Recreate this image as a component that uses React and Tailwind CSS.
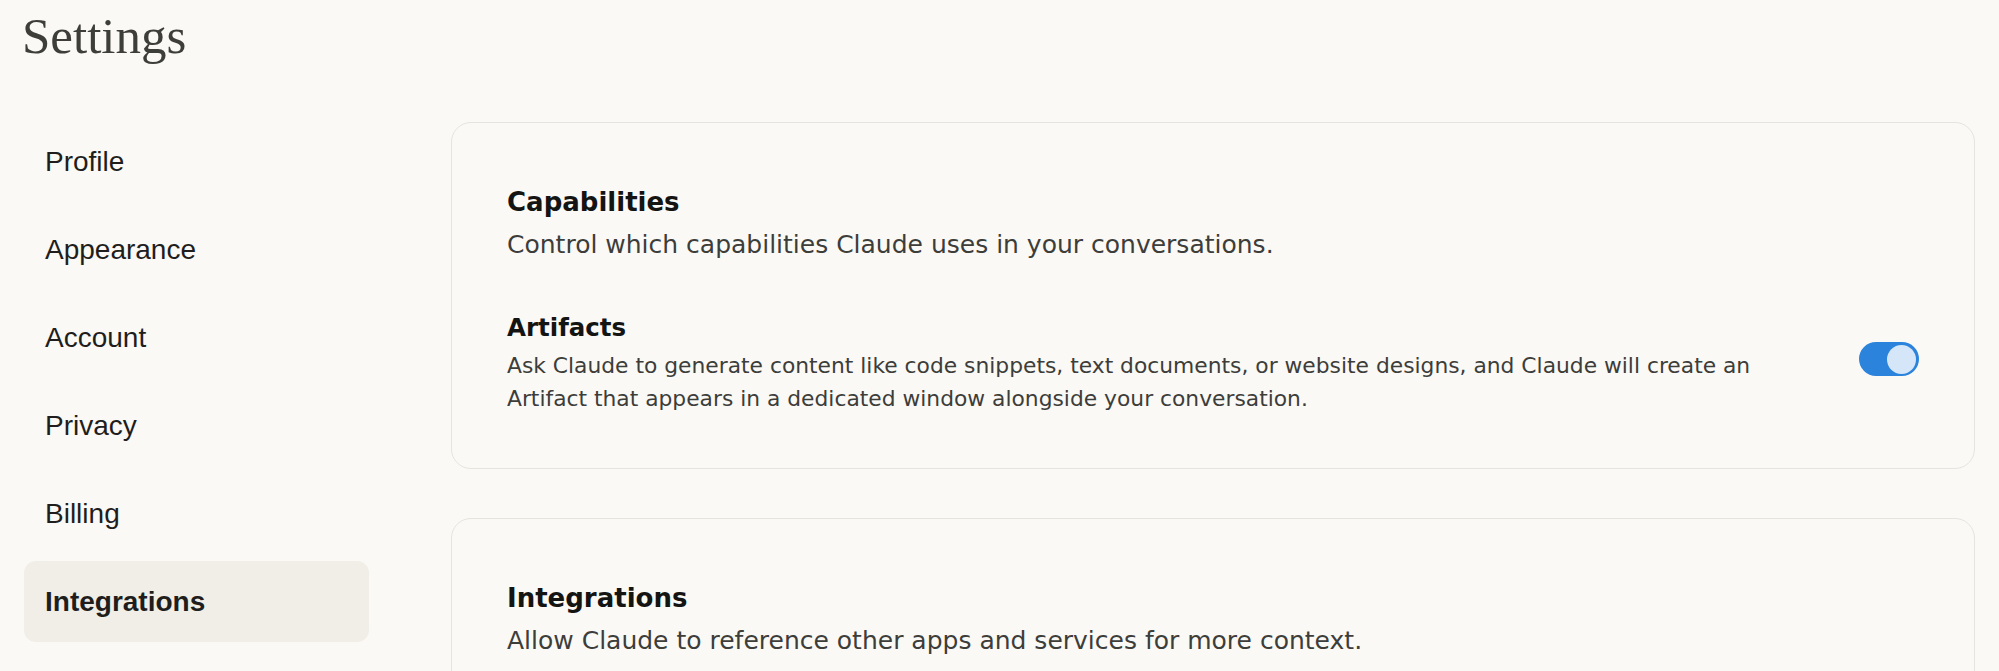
import React from "react";

const navItems = ["Profile", "Appearance", "Account", "Privacy", "Billing", "Integrations"];

function Toggle() {
  return (
    <div className="relative mt-[29px] h-[34px] w-[60px] shrink-0 rounded-full bg-[#2b83db]">
      <div className="absolute right-[3px] top-[2.5px] h-[29px] w-[29px] rounded-full bg-[#d6e6f9]" />
    </div>
  );
}

export default function App() {
  return (
    <div className="h-[671px] overflow-hidden bg-[#faf9f5] px-[24px]">
      <h1 className="-ml-[2px] pt-[11px] text-[51px] leading-[51px] text-[#3d3d3a] font-['Liberation_Serif',serif]">
        Settings
      </h1>
      <div className="mt-[59px] flex gap-[82px]">
        <nav className="flex w-[345px] shrink-0 flex-col gap-[7px] font-['Liberation_Sans',Arial,sans-serif] text-[28px] text-[#1f1e1d]">
          {navItems.map((item) => (
            <div
              key={item}
              className={
                item === "Integrations"
                  ? "flex h-[81px] items-center rounded-[12px] bg-[#f0eee6] px-[21px] font-bold"
                  : "flex h-[81px] items-center rounded-[12px] px-[21px]"
              }
            >
              {item}
            </div>
          ))}
        </nav>
        <main className="flex min-w-0 flex-1 flex-col gap-[49px] pt-[1px] font-['DejaVu_Sans',sans-serif]">
          <section className="rounded-[20px] border border-[#e6e4de] bg-[#faf9f6] px-[55px] pt-[63px] pb-[53px]">
            <h2 className="text-[26px] font-bold leading-[32px] text-[#141413]">Capabilities</h2>
            <p className="mt-[11px] text-[25px] leading-[32px] text-[#3d3d3a]">
              Control which capabilities Claude uses in your conversations.
            </p>
            <div className="mt-[52px] flex items-start justify-between gap-[40px]">
              <div className="max-w-[1300px]">
                <h3 className="text-[24.5px] font-bold leading-[30px] text-[#141413]">Artifacts</h3>
                <p className="mt-[5.5px] text-[21.8px] leading-[33px] text-[#3d3d3a]">
                  Ask Claude to generate content like code snippets, text documents, or website designs, and Claude will create an Artifact that appears in a dedicated window alongside your conversation.
                </p>
              </div>
              <Toggle />
            </div>
          </section>
          <section className="rounded-[20px] border border-[#e6e4de] bg-[#faf9f6] px-[55px] pt-[63px] pb-[53px]">
            <h2 className="text-[26px] font-bold leading-[32px] text-[#141413]">Integrations</h2>
            <p className="mt-[11px] text-[25px] leading-[32px] text-[#3d3d3a]">
              Allow Claude to reference other apps and services for more context.
            </p>
            <div className="h-[200px]" />
          </section>
        </main>
      </div>
    </div>
  );
}
